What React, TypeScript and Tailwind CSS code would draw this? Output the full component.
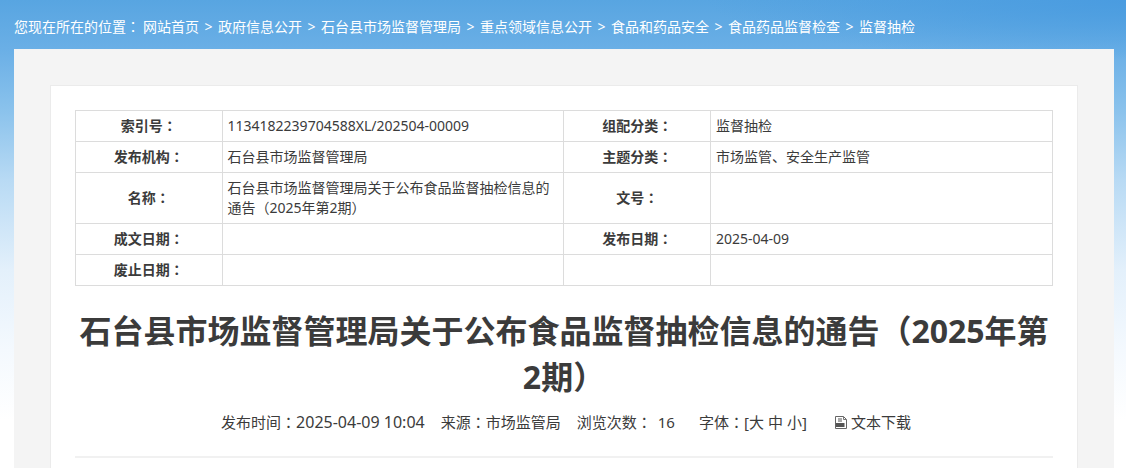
import type { ReactNode } from "react";

const crumbs = [
  "网站首页",
  "政府信息公开",
  "石台县市场监督管理局",
  "重点领域信息公开",
  "食品和药品安全",
  "食品药品监督检查",
  "监督抽检",
];

const rows = [
  ["索引号", "1134182239704588XL/202504-00009", "组配分类", "监督抽检"],
  ["发布机构", "石台县市场监督管理局", "主题分类", "市场监管、安全生产监管"],
  ["名称", "石台县市场监督管理局关于公布食品监督抽检信息的通告（2025年第2期）", "文号", ""],
  ["成文日期", "", "发布日期", "2025-04-09"],
  ["废止日期", "", "", ""],
];

/** Full-width colon, centred in its cell. */
function Colon() {
  return (
    <span lang="zh-TW" className="font-['Noto_Sans_CJK_TC',sans-serif] leading-none">
      ：
    </span>
  );
}

function HeadCell({ children }: { children: string }) {
  return (
    <th scope="row" className="border border-[#dcdcdc] p-[5px] text-center font-bold">
      {children && (
        <>
          {children}
          <Colon />
        </>
      )}
    </th>
  );
}

function DataCell({ children }: { children: ReactNode }) {
  return <td className="border border-[#dcdcdc] p-[5px] text-left">{children}</td>;
}

function FileIcon() {
  return (
    <svg viewBox="0 0 12 13" className="h-[13px] w-3" aria-hidden="true">
      <path d="M.5.5h8l3 3v9H.5z" fill="#fff" stroke="#666" />
      <path d="M8.5.5v3h3" fill="none" stroke="#777" />
      <path d="M3 2h4v4H3z" fill="#aaa" />
      <path d="M1 7h8.5v4H1z" fill="#555" />
    </svg>
  );
}

export default function App() {
  return (
    <div
      lang="zh-CN"
      className="min-h-screen bg-white bg-[radial-gradient(ellipse_420px_60px_at_100%_0px,#4a9ce0,transparent),linear-gradient(180deg,#58a5e1_0px,#6aafe6_49px,#8ac2ec_110px,#b8daf4_180px,#e3f0fb_270px,#f4f9fe_350px,#ffffff_420px)] pr-3 pl-3.5 font-['Noto_Sans','Noto_Sans_CJK_SC',sans-serif] text-sm text-[#3b3b3b]"
    >
      <nav aria-label="位置" className="flex h-[49px] items-center pt-1 leading-5 text-white">
        <span className="mr-[3px]">
          您现在所在的位置
          <Colon />
        </span>
        <ol className="flex">
          {crumbs.map((name, i) => (
            <li key={name} className="flex">
              {i > 0 && <span className="w-[19px] text-center">&gt;</span>}
              <a href="#">{name}</a>
            </li>
          ))}
        </ol>
      </nav>

      <main className="min-h-[calc(100vh-49px)] bg-[#f4f4f4] px-9 pt-9">
        <article className="min-h-[calc(100vh-85px)] border border-b-0 border-[#ebebeb] bg-white px-6 pt-6">
          <table className="w-full table-fixed border-collapse leading-5">
            <colgroup>
              <col className="w-[15%]" />
              <col className="w-[35%]" />
              <col className="w-[15%]" />
              <col className="w-[35%]" />
            </colgroup>
            <tbody>
              {rows.map((row) => (
                <tr key={row[0]} className="h-[31px]">
                  <HeadCell>{row[0]}</HeadCell>
                  <DataCell>{row[1]}</DataCell>
                  <HeadCell>{row[2]}</HeadCell>
                  <DataCell>{row[3]}</DataCell>
                </tr>
              ))}
            </tbody>
          </table>

          <h1 className="mt-[22px] text-center text-[32px] leading-[46px] font-bold">
            石台县市场监督管理局关于公布食品监督抽检信息的通告（2025年第2期）
          </h1>

          <div className="flex justify-center border-b-2 border-[#f1f1f1] pt-3 pb-6 pl-1 text-[15px] leading-5">
            <span className="mr-4 flex">
              <span>
                发布时间
                <Colon />
              </span>
              <time className="text-base leading-5">2025-04-09 10:04</time>
            </span>
            <span className="mr-4">
              来源
              <Colon />
              市场监管局
            </span>
            <span className="mr-6 flex gap-1.5">
              <span>
                浏览次数
                <Colon />
              </span>
              16
            </span>
            <span className="mr-7 flex">
              <span>
                字体
                <Colon />[
              </span>
              <button type="button">大</button>
              <button type="button" className="mx-1">
                中
              </button>
              <button type="button">小</button>]
            </span>
            <a href="#" className="flex items-center gap-1">
              <FileIcon />
              文本下载
            </a>
          </div>
        </article>
      </main>
    </div>
  );
}
